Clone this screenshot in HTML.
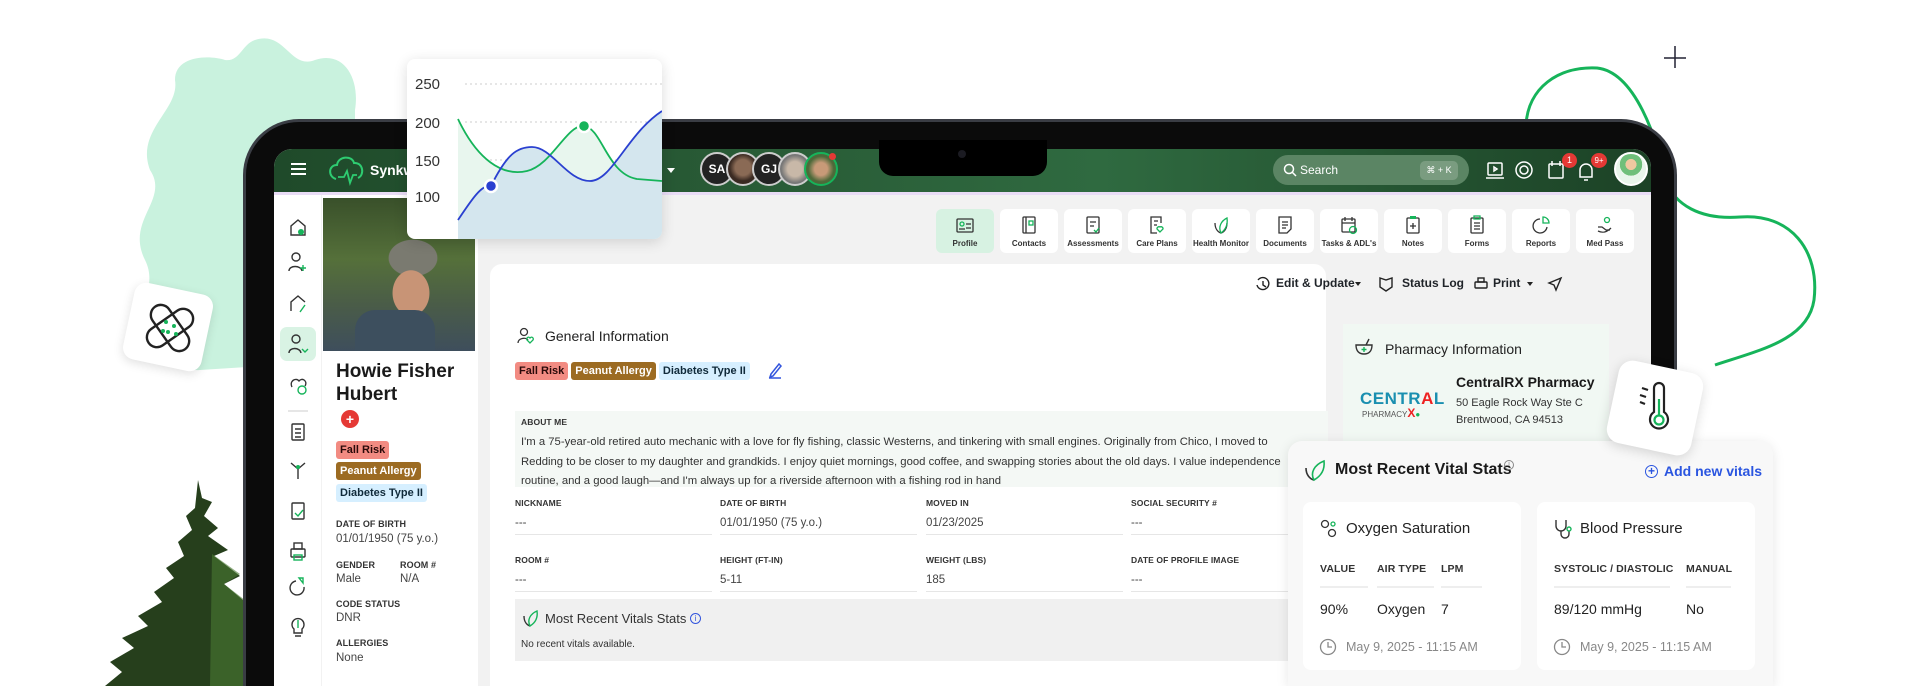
<!DOCTYPE html>
<html><head><meta charset="utf-8">
<style>
*{margin:0;padding:0;box-sizing:border-box}
html,body{width:1920px;height:686px;overflow:hidden;background:#fff}
#w{position:relative;width:1920px;height:686px;overflow:hidden;font-family:"Liberation Sans",sans-serif;color:#1f2328}
.a{position:absolute}
.lbl{font-size:9px;font-weight:bold;color:#333;letter-spacing:.1px}
.val{font-size:11.5px;color:#444}
.tab{position:absolute;top:209px;width:58px;height:44px;background:#fff;border-radius:6px;text-align:center;font-size:8px;font-weight:bold;color:#333}
.tab svg{position:absolute;left:19px;top:6px}
.tab span{position:absolute;left:0;right:0;top:30px;white-space:nowrap}
.tag{display:inline-block;font-size:11px;font-weight:bold;padding:3px 4px;border-radius:3px;margin-right:3px}
.fr{background:#f28b82;color:#2a0a0a}.pa{background:#9c6b22;color:#fff}.dt{background:#d6efff;color:#102a3a}
.fld{position:absolute;width:197px;border-bottom:1.5px solid #e6e6e6;height:37px}
</style></head><body><div id="w">

<!-- blob -->
<svg class="a" style="left:0;top:0" width="420" height="420"><path d="M255 40 C285 30 290 70 315 60 C345 50 360 80 355 110 L355 360 L200 370 C175 372 165 345 150 330 C130 310 160 290 145 260 C125 220 170 200 150 170 C135 130 180 110 175 80 C175 55 210 55 225 60 C240 62 242 44 255 40Z" fill="#c9f2de"/></svg>

<!-- right green curve -->
<svg class="a" style="left:1500px;top:0" width="420" height="420"><path d="M26 125 C28 88 58 66 97 68 C135 72 158 140 165 180 C175 205 200 220 240 217 C290 213 320 250 314 300 C308 340 260 350 215 365" fill="none" stroke="#16b45a" stroke-width="3"/><path d="M175 46 v22 M164 58 h22" stroke="#223" stroke-width="1.5"/></svg>

<!-- tree -->
<svg class="a" style="left:100px;top:476px" width="150" height="210"><path d="M98 4 L102 22 L112 26 L104 40 L118 52 L108 60 L128 74 L114 80 L140 100 L124 108 L150 130 L150 210 L5 210 L22 196 L10 186 L34 172 L22 162 L48 150 L38 140 L62 126 L54 116 L74 102 L66 92 L84 80 L78 66 L92 54 L86 40 L95 32Z" fill="#263f1c"/><path d="M112 78 L140 98 L124 108 L150 128 L150 210 L110 210Z" fill="#4a7a32" opacity=".6"/></svg>

<!-- bandage card -->
<div class="a" style="left:128px;top:288px;width:80px;height:78px;background:#fff;border-radius:12px;box-shadow:0 3px 10px rgba(0,0,0,.12);transform:rotate(12deg)"></div>
<svg class="a" style="left:140px;top:298px" width="60" height="60"><g transform="rotate(-35 30 30)" fill="none" stroke="#222" stroke-width="2.4"><rect x="20" y="4" width="20" height="52" rx="10"/><rect x="4" y="20" width="52" height="20" rx="10"/></g><g fill="#16b45a"><circle cx="26" cy="24" r="2"/><circle cx="34" cy="28" r="2"/><circle cx="28" cy="34" r="2"/><circle cx="36" cy="36" r="2"/><circle cx="23" cy="33" r="2"/></g></svg>

<!-- tablet frame -->
<div class="a" style="left:243px;top:119px;width:1434px;height:567px;background:#0b0b0b;border-radius:56px 56px 0 0;border:3px solid #3a3d44;border-bottom:0"></div>
<!-- screen -->
<div class="a" style="left:274px;top:149px;width:1377px;height:537px;background:#f2f2f2;border-radius:18px 18px 0 0;overflow:hidden">
  <div class="a" style="left:0;top:0;width:1377px;height:43px;background:linear-gradient(90deg,#1f4a2a 0%,#2a5e38 40%,#2f6a40 60%,#1c4226 100%)"></div>
  <div class="a" style="left:0;top:43px;width:1377px;height:3px;background:#e9dcf6"></div>
</div>
<!-- header contents -->
<div class="a" style="left:291px;top:163px;width:15px;height:2px;background:#fff;box-shadow:0 5px 0 #fff,0 10px 0 #fff"></div>
<svg class="a" style="left:328px;top:153px" width="40" height="34"><path d="M8 26 C0 24 0 12 9 12 C10 3 24 2 26 10 C35 9 37 22 30 25" fill="none" stroke="#2ecc71" stroke-width="2"/><path d="M10 24 L16 24 L19 18 L22 30 L25 22 L29 22" fill="none" stroke="#2ecc71" stroke-width="1.8"/></svg>
<div class="a" style="left:370px;top:162px;color:#fff;font-size:14px;font-weight:bold">Synkwi</div>
<div class="a" style="left:667px;top:168px;border:4px solid transparent;border-top:5px solid #fff"></div>
<div class="a" style="left:700px;top:152px;width:34px;height:34px;border-radius:50%;background:#222;border:2px solid #ccc;color:#fff;font-size:12px;font-weight:bold;line-height:30px;text-align:center">SA</div>
<div class="a" style="left:726px;top:152px;width:34px;height:34px;border-radius:50%;background:radial-gradient(circle at 50% 45%,#8a6a55 0 35%,#3a2a22 60%);border:2px solid #ccc"></div>
<div class="a" style="left:752px;top:152px;width:34px;height:34px;border-radius:50%;background:#222;border:2px solid #ccc;color:#fff;font-size:12px;font-weight:bold;line-height:30px;text-align:center">GJ</div>
<div class="a" style="left:778px;top:152px;width:34px;height:34px;border-radius:50%;background:radial-gradient(circle at 50% 50%,#c8b8a8 0 35%,#777 65%);border:2px solid #ccc"></div>
<div class="a" style="left:804px;top:152px;width:34px;height:34px;border-radius:50%;background:radial-gradient(circle at 50% 50%,#c89a78 0 30%,#4d6a3a 60%);border:2px solid #16b45a"></div>
<div class="a" style="left:829px;top:153px;width:7px;height:7px;border-radius:50%;background:#e53935"></div>
<!-- notch -->
<div class="a" style="left:879px;top:140px;width:168px;height:36px;background:#000;border-radius:0 0 14px 14px"></div>
<div class="a" style="left:958px;top:150px;width:8px;height:8px;border-radius:50%;background:#1b1b22"></div>
<!-- search -->
<div class="a" style="left:1273px;top:155px;width:196px;height:30px;border-radius:15px;background:#5b8564"></div>
<svg class="a" style="left:1283px;top:163px" width="14" height="14"><circle cx="6" cy="6" r="4.5" fill="none" stroke="#fff" stroke-width="1.5"/><path d="M9.5 9.5 L13 13" stroke="#fff" stroke-width="1.5"/></svg>
<div class="a" style="left:1300px;top:163px;color:#fff;font-size:12px">Search</div>
<div class="a" style="left:1420px;top:161px;width:38px;height:19px;border-radius:5px;background:#7a9c80;color:#fff;font-size:9px;line-height:19px;text-align:center">⌘ + K</div>
<svg class="a" style="left:1485px;top:158px" width="120" height="26" fill="none" stroke="#fff" stroke-width="1.5"><rect x="3" y="5" width="14" height="12" rx="1"/><path d="M1 20 h18 M9 9 l3 2 -3 2z"/><circle cx="39" cy="12" r="8"/><circle cx="39" cy="12" r="4"/><rect x="64" y="6" width="14" height="14" rx="1"/><path d="M67 3 v5 M75 3 v5"/><path d="M95 19 v-7 a6 6 0 0 1 12 0 v7 z M99 22 h4"/></svg>
<div class="a" style="left:1562px;top:153px;width:15px;height:15px;border-radius:50%;background:#e53935;color:#fff;font-size:9px;text-align:center;line-height:15px">1</div>
<div class="a" style="left:1591px;top:153px;width:16px;height:15px;border-radius:50%;background:#e53935;color:#fff;font-size:8px;text-align:center;line-height:15px">9+</div>
<div class="a" style="left:1614px;top:152px;width:34px;height:34px;border-radius:50%;background:radial-gradient(circle at 50% 35%,#f0c8a0 0 22%,#6fbf7a 23% 45%,#e8f5ea 46%);border:2px solid #fff"></div>

<!-- sidebar -->
<div class="a" style="left:274px;top:195px;width:47px;height:491px;background:#fff"></div>
<div class="a" style="left:280px;top:327px;width:36px;height:34px;background:#d9f3e4;border-radius:7px"></div>
<svg class="a" style="left:286px;top:215px" width="24" height="440" fill="none" stroke="#333" stroke-width="1.4">
<path d="M5 20 v-9 l7 -6 7 6 v9 z"/><circle cx="15" cy="17" r="3" fill="#16b45a" stroke="none"/>
<circle cx="10" cy="42" r="4"/><path d="M3 56 c0-6 12-6 13 0"/><path d="M17 50 v6 M14 53 h6" stroke="#16b45a"/>
<path d="M5 96 v-9 l7 -6 7 6"/><path d="M14 97 l5 -7" stroke="#16b45a"/>
<circle cx="10" cy="124" r="4"/><path d="M3 138 c0-6 11-6 12 0"/><path d="M16 134 l3 3 3-3" stroke="#16b45a"/>
<path d="M6 172 c-3-6 4-10 7-6 c3-4 9 0 6 5"/><circle cx="16" cy="175" r="4" stroke="#16b45a"/>
<path d="M2 196 h20" stroke="#ddd"/>
<rect x="6" y="209" width="12" height="16" rx="1"/><path d="M9 214 h6 M9 218 h6 M9 222 h6"/>
<path d="M5 248 l7 6 7-6 M12 254 v10" /><circle cx="12" cy="252" r="2" fill="#16b45a" stroke="none"/>
<rect x="6" y="288" width="12" height="16" rx="1"/><path d="M9 298 l3 3 5-6" stroke="#16b45a"/>
<rect x="5" y="334" width="14" height="8" rx="1"/><rect x="8" y="328" width="8" height="6"/><rect x="8" y="340" width="8" height="5" stroke="#16b45a"/>
<path d="M10 366 a7 7 0 1 0 8 6"/><path d="M13 363 l4 0 0 5z" stroke="#16b45a"/>
<path d="M8 418 v-4 a6 6 0 1 1 8 0 v4 z M9 421 h6"/><path d="M12 405 v8" stroke="#16b45a"/>
</svg>

<!-- profile column -->
<div class="a" style="left:322px;top:195px;width:156px;height:491px;background:#fff"></div>
<div class="a" style="left:323px;top:198px;width:152px;height:153px;background:radial-gradient(ellipse 26px 32px at 88px 95px,#c89476 0 70%,transparent 72%),radial-gradient(ellipse 40px 30px at 90px 60px,#7a7a70 0 60%,transparent 62%),linear-gradient(180deg,#39502a 0%,#55703a 40%,#4a5c48 70%,#3e4e5c 100%)"></div>
<div class="a" style="left:355px;top:310px;width:80px;height:41px;background:#3d4f5e;border-radius:20px 20px 0 0"></div>
<div class="a" style="left:336px;top:360px;font-size:19px;font-weight:bold;line-height:23px;color:#1a1a1a">Howie Fisher<br>Hubert</div>
<div class="a" style="left:341px;top:410px;width:18px;height:18px;border-radius:50%;background:#e53935;color:#fff;font-size:14px;font-weight:bold;text-align:center;line-height:18px">+</div>
<div class="a" style="left:336px;top:440px"><span class="tag fr">Fall Risk</span></div>
<div class="a" style="left:336px;top:461px"><span class="tag pa">Peanut Allergy</span></div>
<div class="a" style="left:336px;top:483px"><span class="tag dt">Diabetes Type II</span></div>
<div class="a lbl" style="left:336px;top:519px">DATE OF BIRTH</div>
<div class="a val" style="left:336px;top:533px">01/01/1950 (75 y.o.)</div>
<div class="a lbl" style="left:336px;top:560px">GENDER</div><div class="a lbl" style="left:400px;top:560px">ROOM #</div>
<div class="a val" style="left:336px;top:573px">Male</div><div class="a val" style="left:400px;top:573px">N/A</div>
<div class="a lbl" style="left:336px;top:599px">CODE STATUS</div>
<div class="a val" style="left:336px;top:612px">DNR</div>
<div class="a lbl" style="left:336px;top:638px">ALLERGIES</div>
<div class="a val" style="left:336px;top:652px">None</div>

<!-- tabs -->
<div class="tab" style="left:936px;background:#d7f2e2"><svg width="20" height="20" fill="none" stroke="#333" stroke-width="1.3"><rect x="2" y="4" width="16" height="13" rx="1"/><circle cx="7" cy="9" r="2" stroke="#16b45a"/><path d="M11 9 h5 M11 13 h5 M4 14 h6"/></svg><span>Profile</span></div>
<div class="tab" style="left:1000px"><svg width="20" height="20" fill="none" stroke="#333" stroke-width="1.3"><rect x="4" y="2" width="12" height="16" rx="1"/><path d="M7 2 v16"/><rect x="10" y="6" width="4" height="4" stroke="#16b45a"/></svg><span>Contacts</span></div>
<div class="tab" style="left:1064px"><svg width="20" height="20" fill="none" stroke="#333" stroke-width="1.3"><rect x="4" y="2" width="12" height="16" rx="1"/><path d="M7 7 h6 M7 11 h4"/><path d="M11 15 l2 2 3-4" stroke="#16b45a"/></svg><span>Assessments</span></div>
<div class="tab" style="left:1128px"><svg width="20" height="20" fill="none" stroke="#333" stroke-width="1.3"><path d="M14 8 V2 H4 V18 H10"/><path d="M7 6 h4 M7 10 h3"/><path d="M13 17 l-3-3 a2 2 0 0 1 3-2 a2 2 0 0 1 3 2z" stroke="#16b45a"/></svg><span>Care Plans</span></div>
<div class="tab" style="left:1192px"><svg width="20" height="20" fill="none" stroke="#333" stroke-width="1.3"><path d="M4 8 c0 6 3 9 6 10 c3-1 6-4 6-10" /><path d="M10 18 c-3-6 0-12 6-15 c1 7-2 12-6 15z" stroke="#16b45a"/></svg><span>Health Monitor</span></div>
<div class="tab" style="left:1256px"><svg width="20" height="20" fill="none" stroke="#333" stroke-width="1.3"><path d="M4 2 h12 v12 l-4 4 H4z M7 7 h6 M7 10 h6 M7 13 h4"/></svg><span>Documents</span></div>
<div class="tab" style="left:1320px"><svg width="20" height="20" fill="none" stroke="#333" stroke-width="1.3"><rect x="3" y="4" width="13" height="13" rx="1"/><path d="M6 2 v4 M13 2 v4 M3 8 h13"/><circle cx="14" cy="15" r="3.5" stroke="#16b45a"/></svg><span>Tasks &amp; ADL's</span></div>
<div class="tab" style="left:1384px"><svg width="20" height="20" fill="none" stroke="#333" stroke-width="1.3"><rect x="4" y="3" width="12" height="15" rx="1"/><rect x="7" y="1" width="6" height="3" fill="#16b45a" stroke="none"/><path d="M10 8 v6 M7 11 h6"/></svg><span>Notes</span></div>
<div class="tab" style="left:1448px"><svg width="20" height="20" fill="none" stroke="#333" stroke-width="1.3"><rect x="4" y="3" width="12" height="15" rx="1"/><path d="M7 8 h6 M7 11 h6 M7 14 h6"/><rect x="7" y="1" width="6" height="3" stroke="#16b45a"/></svg><span>Forms</span></div>
<div class="tab" style="left:1512px"><svg width="20" height="20" fill="none" stroke="#333" stroke-width="1.3"><path d="M9 4 a7 7 0 1 0 7 8"/><path d="M12 2 v6 h6 a6 6 0 0 0 -6 -6z" stroke="#16b45a"/></svg><span>Reports</span></div>
<div class="tab" style="left:1576px"><svg width="20" height="20" fill="none" stroke="#333" stroke-width="1.3"><path d="M3 12 h4 l4 3 h4 M3 16 c4 2 8 2 13-3"/><circle cx="12" cy="5" r="2.5" stroke="#16b45a"/></svg><span>Med Pass</span></div>

<!-- main card -->
<div class="a" style="left:490px;top:264px;width:836px;height:422px;background:#fff;border-radius:12px 12px 0 0"></div>
<svg class="a" style="left:1254px;top:275px" width="320" height="18" fill="none" stroke="#222" stroke-width="1.4"><path d="M4 5 a6 6 0 1 1 -1 5"/><path d="M9 6 v4 l3 2"/><path d="M126 3 l6 2 6-2 v9 l-6 4 -6-4z"/><rect x="221" y="7" width="12" height="6" rx="1"/><rect x="224" y="3" width="6" height="4"/><path d="M307 3 l-12 5 5 2 2 5z"/></svg>
<div class="a" style="left:1276px;top:276px;font-size:12px;font-weight:bold">Edit &amp; Update</div>
<div class="a" style="left:1355px;top:282px;border:3.5px solid transparent;border-top:4px solid #222"></div>
<div class="a" style="left:1402px;top:276px;font-size:12px;font-weight:bold">Status Log</div>
<div class="a" style="left:1493px;top:276px;font-size:12px;font-weight:bold">Print</div>
<div class="a" style="left:1527px;top:282px;border:3.5px solid transparent;border-top:4px solid #222"></div>

<svg class="a" style="left:516px;top:326px" width="20" height="20" fill="none" stroke="#333" stroke-width="1.3"><circle cx="8" cy="6" r="3.5"/><path d="M2 17 c0-5 8-6 10-3"/><path d="M14 17 l-3-3 a1.8 1.8 0 0 1 3-2 a1.8 1.8 0 0 1 3 2z" stroke="#16b45a"/></svg>
<div class="a" style="left:545px;top:328px;font-size:14px;color:#222">General Information</div>
<div class="a" style="left:515px;top:361px"><span class="tag fr">Fall Risk</span><span class="tag pa">Peanut Allergy</span><span class="tag dt">Diabetes Type II</span></div>
<svg class="a" style="left:767px;top:361px" width="16" height="18" fill="none" stroke="#3355dd" stroke-width="1.5"><path d="M4 13 l8-10 2 2 -8 10 -3 1z M2 17 h12"/></svg>

<div class="a" style="left:515px;top:411px;width:813px;height:76px;background:#f4f8f5"></div>
<div class="a lbl" style="left:521px;top:417px;font-size:8.5px">ABOUT ME</div>
<div class="a" style="left:521px;top:433px;font-size:11.3px;line-height:19.5px;color:#333;white-space:nowrap">I'm a 75-year-old retired auto mechanic with a love for fly fishing, classic Westerns, and tinkering with small engines. Originally from Chico, I moved to<br>Redding to be closer to my daughter and grandkids. I enjoy quiet mornings, good coffee, and swapping stories about the old days. I value independence<br>routine, and a good laugh—and I'm always up for a riverside afternoon with a fishing rod in hand</div>

<div class="fld" style="left:515px;top:498px"><div class="lbl" style="font-size:8.5px">NICKNAME</div><div class="val" style="margin-top:9px">---</div></div>
<div class="fld" style="left:720px;top:498px"><div class="lbl" style="font-size:8.5px">DATE OF BIRTH</div><div class="val" style="margin-top:9px">01/01/1950 (75 y.o.)</div></div>
<div class="fld" style="left:926px;top:498px"><div class="lbl" style="font-size:8.5px">MOVED IN</div><div class="val" style="margin-top:9px">01/23/2025</div></div>
<div class="fld" style="left:1131px;top:498px"><div class="lbl" style="font-size:8.5px">SOCIAL SECURITY #</div><div class="val" style="margin-top:9px">---</div></div>
<div class="fld" style="left:515px;top:555px"><div class="lbl" style="font-size:8.5px">ROOM #</div><div class="val" style="margin-top:9px">---</div></div>
<div class="fld" style="left:720px;top:555px"><div class="lbl" style="font-size:8.5px">HEIGHT (FT-IN)</div><div class="val" style="margin-top:9px">5-11</div></div>
<div class="fld" style="left:926px;top:555px"><div class="lbl" style="font-size:8.5px">WEIGHT (LBS)</div><div class="val" style="margin-top:9px">185</div></div>
<div class="fld" style="left:1131px;top:555px"><div class="lbl" style="font-size:8.5px">DATE OF PROFILE IMAGE</div><div class="val" style="margin-top:9px">---</div></div>

<div class="a" style="left:515px;top:599px;width:813px;height:62px;background:#f0f0f0"></div>
<svg class="a" style="left:521px;top:608px" width="20" height="20" fill="none" stroke-width="1.4"><path d="M3 8 c0 6 3 9 6 10" stroke="#333"/><path d="M9 18 c-3-6 0-12 7-15 c1 7-2 12-7 15z" stroke="#16b45a"/></svg>
<div class="a" style="left:545px;top:611px;font-size:13px;color:#333">Most Recent Vitals Stats</div>
<div class="a" style="left:690px;top:613px;width:11px;height:11px;border:1.2px solid #3355dd;border-radius:50%;color:#3355dd;font-size:8px;text-align:center;line-height:9px">i</div>
<div class="a" style="left:521px;top:639px;font-size:10px;color:#333">No recent vitals available.</div>

<!-- pharmacy -->
<div class="a" style="left:1343px;top:324px;width:266px;height:120px;background:#f1f8f3"></div>
<svg class="a" style="left:1353px;top:337px" width="22" height="20" fill="none" stroke="#333" stroke-width="1.4"><path d="M3 8 h16 c0 6-3 9-8 9 s-8-3-8-9z M16 2 l-3 6"/><path d="M11 10 v5 M8.5 12.5 h5" stroke="#16b45a"/></svg>
<div class="a" style="left:1385px;top:341px;font-size:14px;color:#222">Pharmacy Information</div>
<div class="a" style="left:1360px;top:389px;font-size:17px;font-weight:bold;color:#1a8fb0;letter-spacing:.5px">CENTR<span style="color:#e22">A</span>L</div>
<div class="a" style="left:1362px;top:406px;font-size:8px;color:#555">PHARMACY<b style="color:#e22;font-size:12px">X</b><span style="color:#16b45a">●</span></div>
<div class="a" style="left:1456px;top:374px;font-size:14px;font-weight:bold;color:#1a1a1a">CentralRX Pharmacy</div>
<div class="a" style="left:1456px;top:395px;font-size:11px;line-height:17px;color:#333">50 Eagle Rock Way Ste C<br>Brentwood, CA 94513</div>

<!-- vitals card -->
<div class="a" style="left:1288px;top:441px;width:485px;height:245px;background:#f8f8f8;border-radius:14px 14px 0 0;box-shadow:0 2px 12px rgba(0,0,0,.1)"></div>
<svg class="a" style="left:1303px;top:458px" width="26" height="26" fill="none" stroke-width="1.6"><path d="M3 10 c0 7 4 11 8 12" stroke="#333"/><path d="M11 22 c-4-7 0-15 10-19 c1 9-3 15-10 19z" stroke="#16b45a"/></svg>
<div class="a" style="left:1335px;top:461px;font-size:16px;font-weight:bold;color:#1a1a1a">Most Recent Vital Stats</div>
<div class="a" style="left:1504px;top:460px;width:10px;height:10px;border:1px solid #888;border-radius:50%;font-size:7px;text-align:center;line-height:8px;color:#888">i</div>
<div class="a" style="left:1645px;top:465px;width:13px;height:13px;border:1.5px solid #2a55e0;border-radius:50%;color:#2a55e0;font-size:12px;font-weight:bold;text-align:center;line-height:10px">+</div>
<div class="a" style="left:1664px;top:463px;font-size:14px;font-weight:bold;color:#2a55e0">Add new vitals</div>

<div class="a" style="left:1303px;top:502px;width:218px;height:168px;background:#fff;border-radius:8px"></div>
<div class="a" style="left:1537px;top:502px;width:218px;height:168px;background:#fff;border-radius:8px"></div>
<svg class="a" style="left:1320px;top:519px" width="18" height="20" fill="none" stroke="#333" stroke-width="1.3"><circle cx="5" cy="5" r="3.5"/><circle cx="12" cy="14" r="3.5"/><circle cx="13" cy="5" r="2" stroke="#16b45a"/></svg>
<div class="a" style="left:1346px;top:520px;font-size:15px;color:#222">Oxygen Saturation</div>
<svg class="a" style="left:1553px;top:518px" width="20" height="22" fill="none" stroke="#333" stroke-width="1.4"><path d="M3 2 v6 a5 5 0 0 0 10 0 v-6 M8 13 v3 a4 4 0 0 0 8 0 v-3"/><circle cx="16" cy="11" r="2" stroke="#16b45a"/></svg>
<div class="a" style="left:1580px;top:520px;font-size:15px;color:#222">Blood Pressure</div>
<div class="a lbl" style="left:1320px;top:563px;font-size:10.5px">VALUE</div>
<div class="a lbl" style="left:1377px;top:563px;font-size:10.5px">AIR TYPE</div>
<div class="a lbl" style="left:1441px;top:563px;font-size:10.5px">LPM</div>
<div class="a lbl" style="left:1554px;top:563px;font-size:10.5px">SYSTOLIC / DIASTOLIC</div>
<div class="a lbl" style="left:1686px;top:563px;font-size:10.5px">MANUAL</div>
<div class="a" style="left:1320px;top:586px;width:48px;height:2px;background:#eee"></div>
<div class="a" style="left:1377px;top:586px;width:57px;height:2px;background:#eee"></div>
<div class="a" style="left:1441px;top:586px;width:41px;height:2px;background:#eee"></div>
<div class="a" style="left:1554px;top:586px;width:116px;height:2px;background:#eee"></div>
<div class="a" style="left:1686px;top:586px;width:45px;height:2px;background:#eee"></div>
<div class="a" style="left:1320px;top:601px;font-size:14px;color:#222">90%</div>
<div class="a" style="left:1377px;top:601px;font-size:14px;color:#222">Oxygen</div>
<div class="a" style="left:1441px;top:601px;font-size:14px;color:#222">7</div>
<div class="a" style="left:1554px;top:601px;font-size:14px;color:#222">89/120 mmHg</div>
<div class="a" style="left:1686px;top:601px;font-size:14px;color:#222">No</div>
<svg class="a" style="left:1319px;top:638px" width="20" height="20" fill="none" stroke="#888" stroke-width="1.3"><circle cx="9" cy="9" r="7.5"/><path d="M9 4 v5 h4"/></svg>
<div class="a" style="left:1346px;top:640px;font-size:12.5px;color:#888">May 9, 2025 - 11:15 AM</div>
<svg class="a" style="left:1553px;top:638px" width="20" height="20" fill="none" stroke="#888" stroke-width="1.3"><circle cx="9" cy="9" r="7.5"/><path d="M9 4 v5 h4"/></svg>
<div class="a" style="left:1580px;top:640px;font-size:12.5px;color:#888">May 9, 2025 - 11:15 AM</div>

<!-- thermometer card -->
<div class="a" style="left:1612px;top:366px;width:86px;height:84px;background:#fff;border-radius:14px;box-shadow:0 3px 12px rgba(0,0,0,.15);transform:rotate(12deg)"></div>
<svg class="a" style="left:1630px;top:380px" width="50" height="60" fill="none" stroke-width="2.2"><path d="M24 8 a5 5 0 0 1 10 0 v24 a9 9 0 1 1 -10 0z" stroke="#222"/><circle cx="29" cy="40" r="4.5" stroke="#16b45a"/><path d="M29 35 v-16" stroke="#16b45a"/><path d="M12 8 l6 2 M10 15 l6 2 M10 22 l5 2" stroke="#222"/></svg>

<!-- chart card -->
<div class="a" style="left:407px;top:59px;width:255px;height:180px;background:#fff;border-radius:8px;box-shadow:0 3px 14px rgba(0,0,0,.14);overflow:hidden">
<svg width="255" height="180" style="position:absolute;left:0;top:0">
<g font-family="Liberation Sans" font-size="15" fill="#333"><text x="8" y="30">250</text><text x="8" y="69">200</text><text x="8" y="107">150</text><text x="8" y="143">100</text></g>
<g stroke="#ccc" stroke-dasharray="2 3"><path d="M58 25 H255 M58 63 H255 M58 101 H255 M58 138 H255 M58 177 H255"/></g>
<path d="M51 60 C70 100 95 118 120 112 C145 106 160 65 177 67 C195 69 200 115 230 120 L255 122 L255 180 L51 180Z" fill="#e8f6ee"/>
<path d="M51 161 C65 140 75 125 84 127 C100 95 110 88 125 88 C145 88 160 122 183 122 C205 122 220 75 255 52 L255 180 L51 180Z" fill="#d4e6ee"/>
<path d="M51 60 C70 100 95 118 120 112 C145 106 160 65 177 67 C195 69 200 115 230 120 L255 122" fill="none" stroke="#16b45a" stroke-width="1.8"/>
<path d="M51 161 C65 140 75 125 84 127 C100 95 110 88 125 88 C145 88 160 122 183 122 C205 122 220 75 255 52" fill="none" stroke="#2a40d0" stroke-width="1.8"/>
<circle cx="177" cy="67" r="6" fill="#16b45a" stroke="#fff" stroke-width="2.5"/>
<circle cx="84" cy="127" r="6" fill="#2a40d0" stroke="#fff" stroke-width="2.5"/>
</svg></div>

</div></body></html>
